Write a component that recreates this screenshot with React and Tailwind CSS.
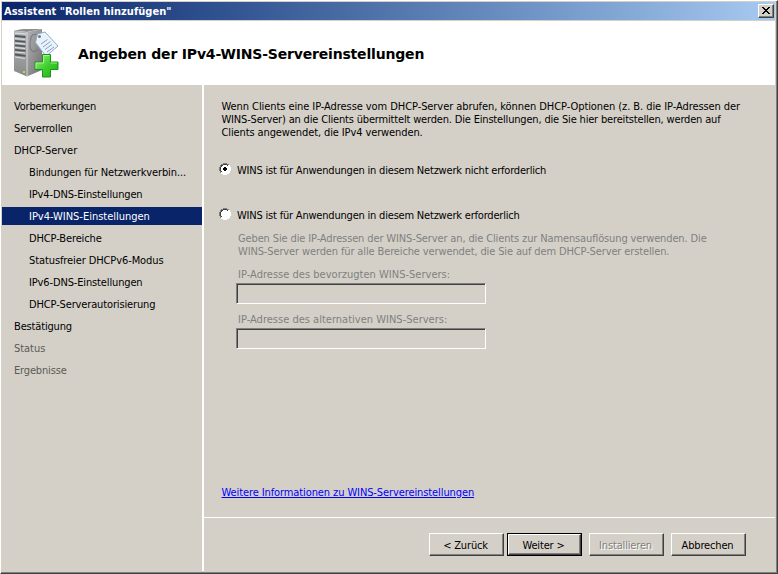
const steps = [
  { label: 'Vorbemerkungen', tracking: 'tracking-[-0.2px]' },
  { label: 'Serverrollen', tracking: 'tracking-[-0.14px]' },
  { label: 'DHCP-Server', tracking: 'tracking-[-0.05px]' },
  { label: 'Bindungen für Netzwerkverbin...', nested: true, tracking: 'tracking-[-0.12px]' },
  { label: 'IPv4-DNS-Einstellungen', nested: true, tracking: 'tracking-[-0.14px]' },
  { label: 'IPv4-WINS-Einstellungen', nested: true, active: true, tracking: 'tracking-[-0.02px]' },
  { label: 'DHCP-Bereiche', nested: true, tracking: 'tracking-[-0.12px]' },
  { label: 'Statusfreier DHCPv6-Modus', nested: true, tracking: 'tracking-[-0.1px]' },
  { label: 'IPv6-DNS-Einstellungen', nested: true, tracking: 'tracking-[-0.14px]' },
  { label: 'DHCP-Serverautorisierung', nested: true, tracking: 'tracking-[-0.14px]' },
  { label: 'Bestätigung', tracking: 'tracking-[-0.16px]' },
  { label: 'Status', disabled: true, tracking: 'tracking-[-0.05px]' },
  { label: 'Ergebnisse', disabled: true, tracking: 'tracking-[-0.16px]' },
];

function ServerIcon() {
  return (
    <svg width="48" height="52" viewBox="0 0 48 52" className="shrink-0">
      <defs>
        <linearGradient id="side" x1="0" y1="0" x2="1" y2="1">
          <stop offset="0" stopColor="#b4b4b4" />
          <stop offset="1" stopColor="#6e6e6e" />
        </linearGradient>
        <linearGradient id="front" x1="0" y1="0" x2="0" y2="1">
          <stop offset="0" stopColor="#b4b6b8" />
          <stop offset="1" stopColor="#8a8a8a" />
        </linearGradient>
        <linearGradient id="plus" x1="0" y1="0" x2="1" y2="1">
          <stop offset="0" stopColor="#a4f283" />
          <stop offset="0.5" stopColor="#3ed02f" />
          <stop offset="1" stopColor="#22ad18" />
        </linearGradient>
      </defs>
      <path d="M1 2.5L10 1H29L14 4Z" fill="#8d9092" />
      <path d="M1 2.5L14 4V48.5L1 43Z" fill="url(#front)" />
      <path d="M14 4L29 1V42L14 48.5Z" fill="url(#side)" />
      <path d="M2 5L13 6M2 10.5L12 11.5M2 15L12 16M2 19.5L12 20.5M2 24L12 25M2 29L12 30.5" stroke="#e0e3e5" strokeWidth="1" />
      <path d="M2 8L12.5 9M2 12.8L12.5 13.8M2 17.3L12.5 18.3M2 21.8L12.5 22.8M2 26.5L12.5 27.8" stroke="#54585b" strokeWidth="1.8" />
      <path d="M14 4V48" stroke="#dedede" strokeWidth="0.9" />
      <rect x="10" y="43" width="2" height="2" fill="#a8ea33" />
      <path d="M27 7Q18 4 17.5 12Q16 21 19 23Q21 25 25 21" fill="none" stroke="#777d82" strokeWidth="1.1" />
      <path d="M24.5 6L32 4L45 18L34 27.5L32 27L22.5 14.5Z" fill="#e9f2fa" stroke="#8fadc8" strokeWidth="1" strokeLinejoin="round" />
      <circle cx="26.5" cy="8.5" r="1.5" fill="#747b80" />
      <path d="M28 16L34.5 11.5M30 19L37.5 13.5M32 21.5L39 16.5M34 24L41 19" stroke="#7fa2c8" strokeWidth="1" />
      <path d="M29.5 26.5H37.5V34H45V41.5H37.5V49H29.5V41.5H22V34H29.5Z" fill="url(#plus)" stroke="#1c9417" strokeWidth="1" strokeLinejoin="round" />
      <path d="M30.5 35V27.5H36.5M23 40.5V35H30.5M37.5 35H44" fill="none" stroke="#b6f6a0" strokeWidth="0.8" />
    </svg>
  );
}

function Radio({ checked, label, className }) {
  return (
    <label className={'flex h-[14px] items-start ' + className}>
      <svg width="12" height="12" viewBox="0 0 12 12" shapeRendering="crispEdges" className="shrink-0">
        <path d="M4 1H8V2H10V4H11V8H10V10H8V11H4V10H2V8H1V4H2V2H4Z" fill="white" />
        <path d="M4 0H8V1H4ZM2 1H4V2H2ZM8 1H10V2H8ZM1 2H2V4H1ZM0 4H1V8H0ZM1 8H2V10H1Z" fill="#808080" />
        <path d="M4 1H8V2H4ZM2 2H4V3H2ZM8 2H9V3H8ZM2 3H3V4H2ZM1 4H2V8H1ZM2 8H3V9H2Z" fill="#404040" />
        <path d="M10 2H11V4H10ZM11 4H12V8H11ZM10 8H11V10H10ZM8 10H10V11H8ZM4 11H8V12H4ZM2 10H4V11H2Z" fill="white" />
        {checked && <path d="M5 4H7V5H8V7H7V8H5V7H4V5H5Z" fill="black" />}
      </svg>
      <span className="mt-px ml-[6px] whitespace-nowrap tracking-[-0.2px]">{label}</span>
    </label>
  );
}

const edge = 'border border-t-white border-l-white border-r-[#404040] border-b-[#404040] ';

function Button({ children, primary, disabled, className = '' }) {
  const face = (
    <button
      className={
        'flex items-center justify-center whitespace-nowrap pt-[2px] pr-[2px] tracking-[-0.16px] shadow-[inset_-1px_-1px_0_#808080] ' +
        edge +
        (primary ? 'h-[21px] w-[73px] ' : 'h-[23px] w-[75px] ') +
        (disabled ? 'text-[#808080] [text-shadow:1px_1px_0_white]' : '')
      }
    >
      {children}
    </button>
  );
  return <div className={(primary ? 'border border-black ' : '') + className}>{face}</div>;
}

function AddressInput() {
  return (
    <div className="mt-[2px] -ml-[2px] h-[21px] w-[250px] border border-t-[#808080] border-r-white border-b-white border-l-[#808080] shadow-[inset_1px_1px_0_#404040]" />
  );
}

export default function App() {
  return (
    <div className="flex h-[574px] w-[778px] flex-col overflow-hidden border border-t-white border-l-white border-r-[#404040] border-b-[#404040] bg-[#d4d0c8] font-['DejaVu_Sans_Condensed','DejaVu_Sans',sans-serif] text-[11px] leading-[13px] text-black [font-stretch:condensed]">
      <div className="flex min-h-0 grow flex-col border-r border-b border-[#808080] pt-px pl-px">
        <header className="mr-px mb-px flex h-[18px] shrink-0 items-center justify-between bg-linear-to-r from-[#0a246a] to-[#a6caf0] pr-px pl-[2px] font-bold text-white">
          <span className="whitespace-nowrap tracking-[0.03px]">Assistent "Rollen hinzufügen"</span>
          <button className={'flex h-[14px] w-[16px] items-center justify-center bg-[#d4d0c8] pr-px pb-px shadow-[inset_-1px_-1px_0_#808080] ' + edge}>
            <svg width="8" height="7" viewBox="0 0 8 7" shapeRendering="crispEdges">
              <path d="M0 0H2V1H3V2H5V1H6V0H8V1H7V2H6V3H5V4H6V5H7V6H8V7H6V6H5V5H3V6H2V7H0V6H1V5H2V4H3V3H2V2H1V1H0Z" fill="black" />
            </svg>
          </button>
        </header>
        <section className="mr-px flex h-[64px] shrink-0 bg-white pt-[7px] pl-[11px]">
          <ServerIcon />
          <h1 className="mt-[16px] ml-[17px] font-['DejaVu_Sans',sans-serif] text-[14px] leading-[20px] font-bold tracking-[-0.18px] whitespace-nowrap [font-stretch:normal]">Angeben der IPv4-WINS-Servereinstellungen</h1>
        </section>
        <div className="flex min-h-0 grow">
          <nav className="mb-px w-[202px] shrink-0 border-r-2 border-white pt-[12px]">
            {steps.map((s) => (
              <div
                key={s.label}
                className={
                  'mb-[4px] h-[18px] pt-[3px] whitespace-nowrap ' + s.tracking +
                  (s.nested ? ' pl-[27px]' : ' pl-[12px]') +
                  (s.active ? ' bg-[#0a246a] text-white' : '') +
                  (s.disabled ? ' text-[#5d5a55]' : '')
                }
              >
                {s.label}
              </div>
            ))}
          </nav>
          <div className="flex min-w-0 grow flex-col">
            <main className="mr-px flex h-[433px] shrink-0 flex-col border-b border-white pt-[15px] pl-[17.5px] whitespace-nowrap">
              <div>
                <p className="tracking-[-0.075px]">Wenn Clients eine IP-Adresse vom DHCP-Server abrufen, können DHCP-Optionen (z. B. die IP-Adressen der</p>
                <p className="tracking-[-0.175px]">WINS-Server) an die Clients übermittelt werden. Die Einstellungen, die Sie hier bereitstellen, werden auf</p>
                <p className="tracking-[-0.11px]">Clients angewendet, die IPv4 verwenden.</p>
              </div>
              <Radio checked className="mt-[24px] -ml-[2.5px]" label="WINS ist für Anwendungen in diesem Netzwerk nicht erforderlich" />
              <Radio className="mt-[31px] -ml-[2.5px]" label="WINS ist für Anwendungen in diesem Netzwerk erforderlich" />
              <div className="mt-[10px] ml-[16.5px] text-[#808080]">
                <p className="tracking-[-0.13px]">Geben Sie die IP-Adressen der WINS-Server an, die Clients zur Namensauflösung verwenden. Die</p>
                <p className="tracking-[-0.13px]">WINS-Server werden für alle Bereiche verwendet, die Sie auf dem DHCP-Server erstellen.</p>
                <p className="mt-[10px] tracking-[0.02px]">IP-Adresse des bevorzugten WINS-Servers:</p>
                <AddressInput />
                <p className="mt-[9px] tracking-[0.01px]">IP-Adresse des alternativen WINS-Servers:</p>
                <AddressInput />
              </div>
              <a className="mt-[137px] self-start tracking-[-0.1px] text-[#0000ff] underline">Weitere Informationen zu WINS-Servereinstellungen</a>
            </main>
            <footer className="flex justify-end pt-[15px] pr-[30px]">
              <Button>&lt; Zurück</Button>
              <Button primary className="ml-[3px]">Weiter &gt;</Button>
              <Button disabled className="ml-[7px]">Installieren</Button>
              <Button className="ml-[7px]">Abbrechen</Button>
            </footer>
          </div>
        </div>
      </div>
    </div>
  );
}
